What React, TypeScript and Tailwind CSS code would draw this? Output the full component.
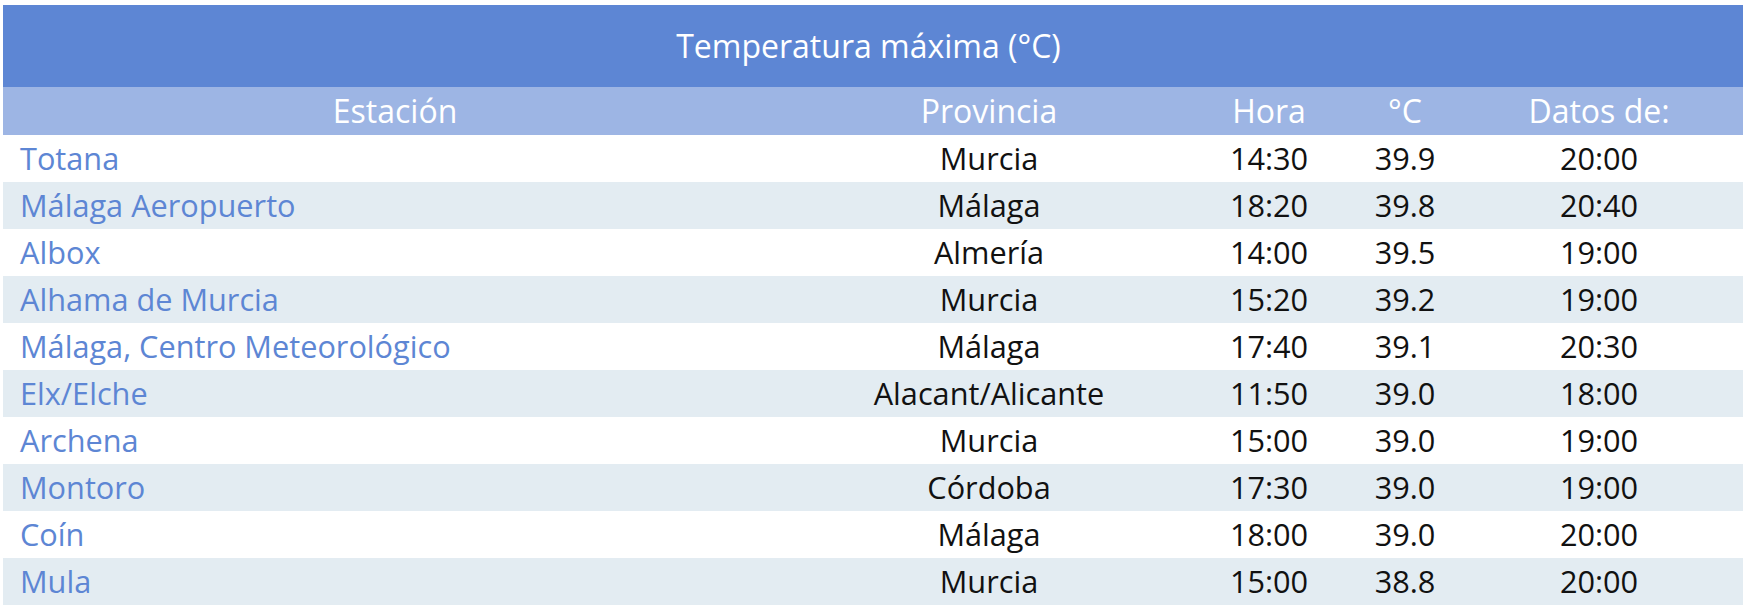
import React from "react";

const rows = [
  ["Totana", "Murcia", "14:30", "39.9", "20:00"],
  ["Málaga Aeropuerto", "Málaga", "18:20", "39.8", "20:40"],
  ["Albox", "Almería", "14:00", "39.5", "19:00"],
  ["Alhama de Murcia", "Murcia", "15:20", "39.2", "19:00"],
  ["Málaga, Centro Meteorológico", "Málaga", "17:40", "39.1", "20:30"],
  ["Elx/Elche", "Alacant/Alicante", "11:50", "39.0", "18:00"],
  ["Archena", "Murcia", "15:00", "39.0", "19:00"],
  ["Montoro", "Córdoba", "17:30", "39.0", "19:00"],
  ["Coín", "Málaga", "18:00", "39.0", "20:00"],
  ["Mula", "Murcia", "15:00", "38.8", "20:00"],
];

const cols = "grid grid-cols-[784px_404px_156px_116px_272px_1fr]";

export default function App() {
  return (
    <div
      className="w-[1746px] h-[614px] bg-white pt-[5px] px-[3px] font-normal"
      style={{ fontFamily: '"Open Sans", "Noto Sans", sans-serif' }}
    >
      <div className="w-[1740px]">
        <div className="h-[82px] bg-[#5d86d4] flex items-center justify-center pr-[9px] text-white text-[32px]">
          Temperatura máxima (°C)
        </div>
        <div className={`${cols} h-[48px] bg-[#9db5e4] text-white text-[32px] items-center text-center`}>
          <div>Estación</div>
          <div>Provincia</div>
          <div>Hora</div>
          <div>°C</div>
          <div>Datos de:</div>
        </div>
        {rows.map((r, i) => (
          <div
            key={i}
            className={`${cols} h-[47px] items-center text-[30.7px] text-[#111] ${i % 2 === 1 ? "bg-[#e3ecf2]" : "bg-white"}`}
          >
            <div className="pl-[17px] text-[#5d86d4]">{r[0]}</div>
            <div className="text-center">{r[1]}</div>
            <div className="text-center">{r[2]}</div>
            <div className="text-center">{r[3]}</div>
            <div className="text-center">{r[4]}</div>
          </div>
        ))}
      </div>
    </div>
  );
}
